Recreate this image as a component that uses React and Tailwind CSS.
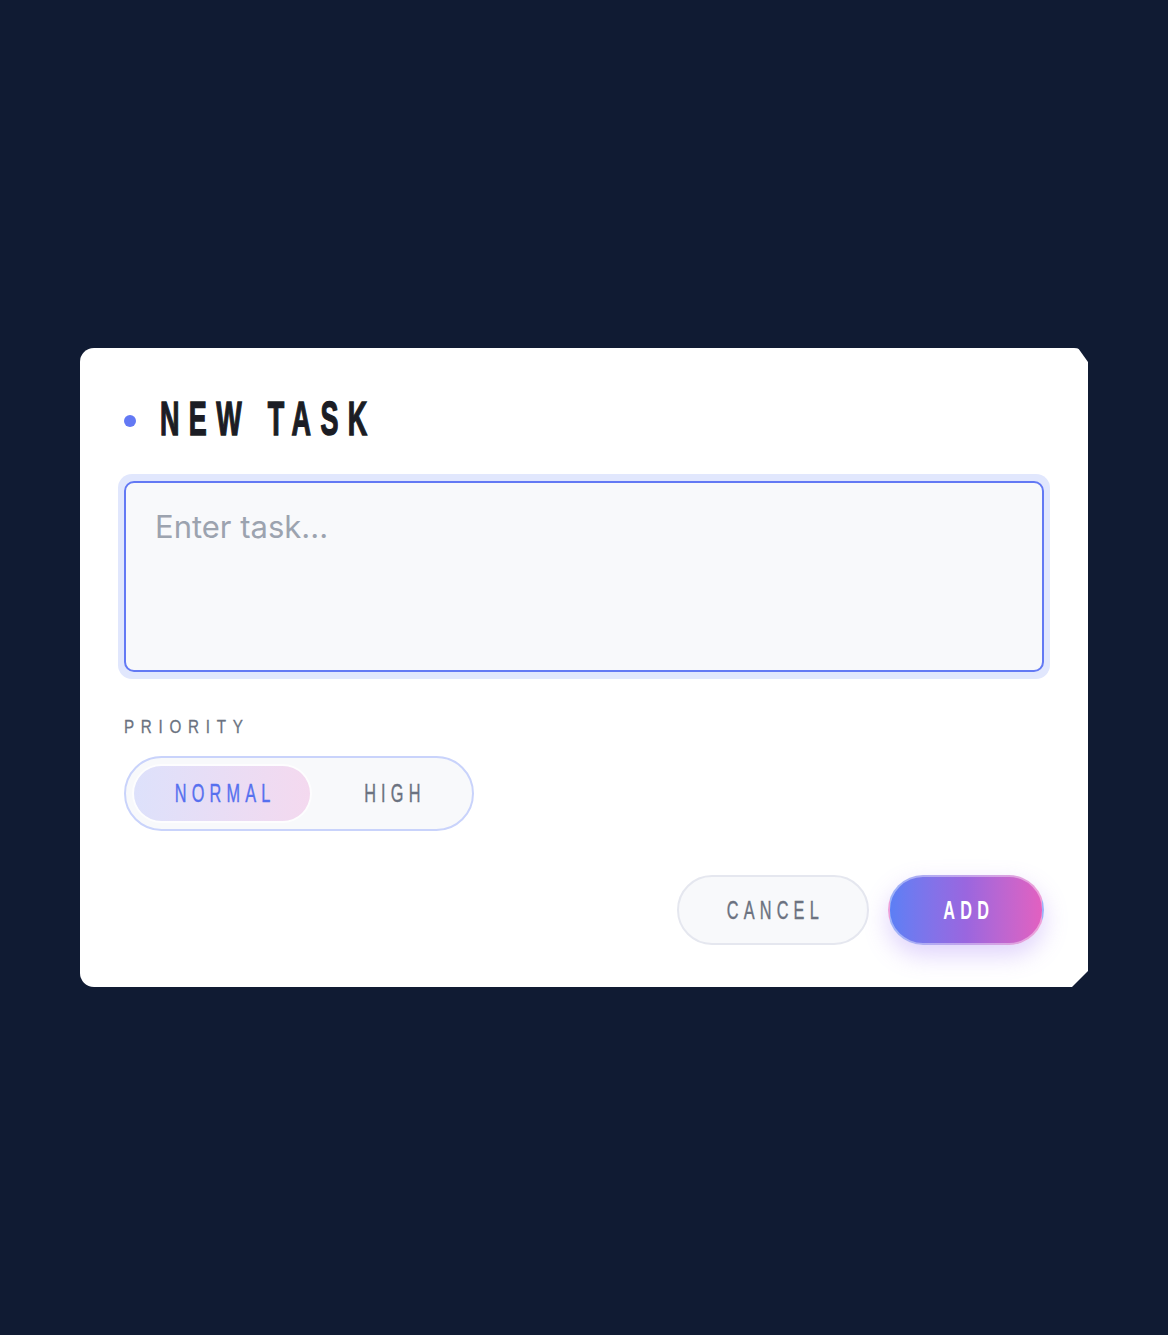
import { useState } from 'react'

// Arial-metric face, squeezed horizontally to get the condensed display look
const face = "font-['Liberation_Sans',Arial,sans-serif]"

function Squeezed({ children, className = '' }) {
  return <span className={`inline-block origin-center scale-x-[0.65] whitespace-nowrap pl-[8px] tracking-[8px] ${className}`}>{children}</span>
}

function PriorityToggle({ value, onChange }) {
  const options = [
    { id: 'normal', label: 'NORMAL', width: 'w-[176px]' },
    { id: 'high', label: 'HIGH', width: 'flex-1 pl-[10px]' },
  ]
  return (
    <div className="flex h-[75px] w-[350px] items-center rounded-full border-2 border-[#c9d3fb] bg-[#f8f9fb] p-[8px]">
      {options.map((opt) => (
        <button
          key={opt.id}
          onClick={() => onChange(opt.id)}
          className={`flex h-[55px] items-center justify-center rounded-full ${opt.width} ${face} text-[25px] leading-none ${
            value === opt.id
              ? 'bg-gradient-to-r from-[#dde1fb] to-[#f4d9ef] text-[#5670ef] ring-2 ring-white/70'
              : 'text-[#6b7280]'
          }`}
        >
          <Squeezed className="[-webkit-text-stroke:0.4px_currentColor]">{opt.label}</Squeezed>
        </button>
      ))}
    </div>
  )
}

export default function App() {
  const [task, setTask] = useState('')
  const [priority, setPriority] = useState('normal')

  return (
    <div className="flex min-h-[1335px] items-center justify-center bg-[#101b33]">
      <div className="h-[639px] w-[1008px] rounded-[14px] bg-white px-[44px] pt-[37px] [clip-path:polygon(0_0,calc(100%-10px)_0,100%_14px,100%_calc(100%-16px),calc(100%-16px)_100%,0_100%)]">
        {/* header */}
        <div className="flex h-[66px] items-center">
          <span className="mt-[6px] h-[12px] w-[12px] shrink-0 rounded-full bg-[#6379f4]" />
          <h1 className={`ml-[24px] origin-left scale-x-[0.55] whitespace-nowrap ${face} text-[49px] font-bold leading-none tracking-[17px] text-[#1b1d24] [-webkit-text-stroke:1.5px_#1b1d24]`}>
            NEW TASK
          </h1>
        </div>

        {/* task input */}
        <div className="-mx-[6px] mt-[23px] rounded-[14px] bg-[#e1e7fd] px-[6px] py-[7px]">
          <textarea
            value={task}
            onChange={(e) => setTask(e.target.value)}
            placeholder="Enter task..."
            className="block h-[191px] w-full resize-none rounded-[10px] border-2 border-[#6379f4] bg-[#f8f9fb] px-[29px] pt-[28px] font-['Inter',sans-serif] text-[31px] leading-none text-[#1b1d24] outline-none placeholder:text-[#9ca3af]"
          />
        </div>

        {/* priority */}
        <div className={`mt-[38px] ${face} text-[19px] leading-none text-[#6b7280]`}>
          <span className="inline-block origin-left scale-x-[0.8] whitespace-nowrap tracking-[8.4px] [-webkit-text-stroke:0.3px_#6b7280]">PRIORITY</span>
        </div>
        <div className="mt-[20px]">
          <PriorityToggle value={priority} onChange={setPriority} />
        </div>

        {/* actions */}
        <div className="mt-[44px] flex justify-end gap-[19px]">
          <button
            className={`h-[70px] w-[192px] rounded-full border-2 border-[#e5e7ef] bg-[#f8f9fb] ${face} text-[25px] leading-none text-[#6b7280]`}
          >
            <Squeezed className="[-webkit-text-stroke:0.4px_#6b7280]">CANCEL</Squeezed>
          </button>
          <button
            className={`h-[70px] w-[156px] rounded-full border-2 border-white/40 bg-gradient-to-r from-[#5b7ff5] via-[#9a66df] to-[#e260c0] ${face} text-[25px] font-bold leading-none text-white shadow-[0_10px_24px_rgba(139,92,246,0.28)]`}
          >
            <Squeezed>ADD</Squeezed>
          </button>
        </div>
      </div>
    </div>
  )
}
